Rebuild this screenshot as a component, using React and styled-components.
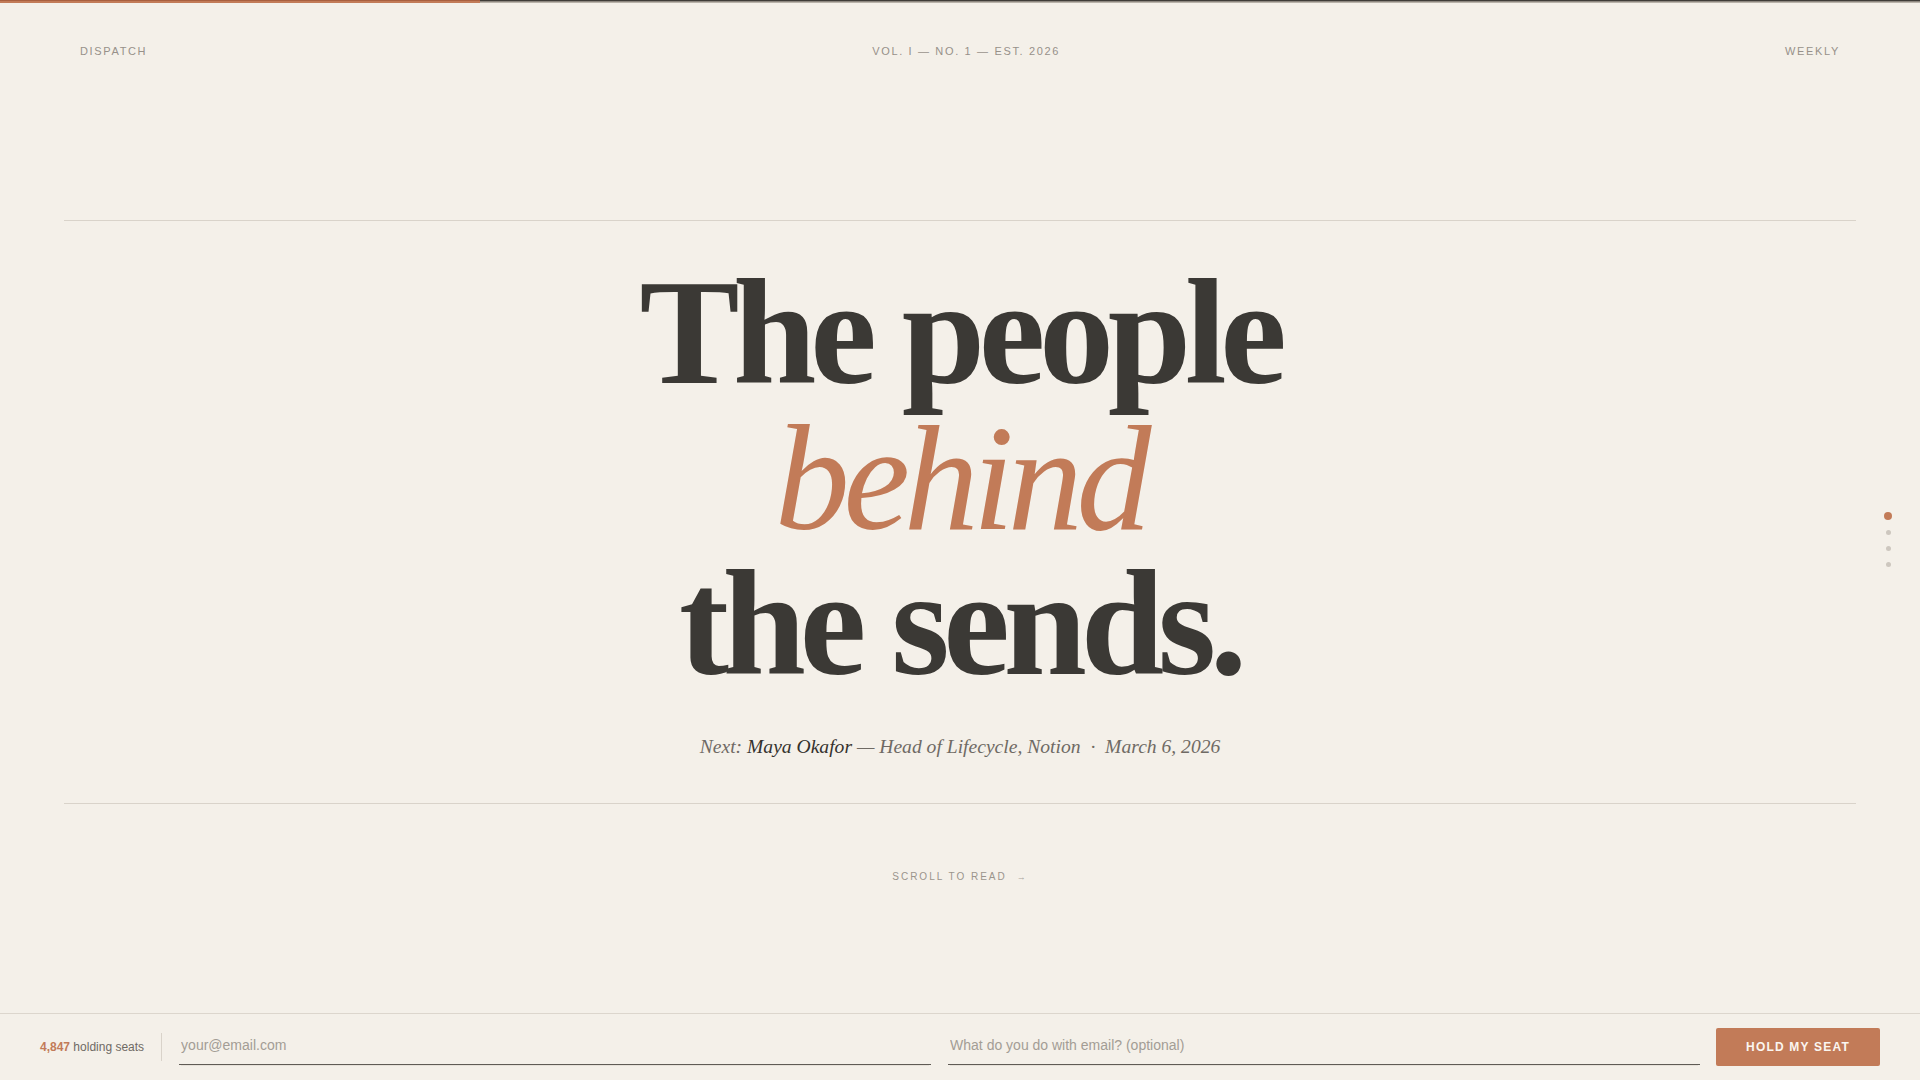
import React from "react";
import styled, { createGlobalStyle } from "styled-components";

const GlobalStyle = createGlobalStyle`
  html, body { margin: 0; padding: 0; background: #f4f0e9; }
  body { font-family: "Liberation Sans", Arial, sans-serif; color: #3b3935; overflow: hidden; }
  * { box-sizing: border-box; }
`;

const Page = styled.div`
  min-height: 100vh;
  display: flex;
  flex-direction: column;
  background: #f4f0e9;
`;

const ProgressTrack = styled.div`
  display: flex;
  height: 3px;
`;

const ProgressFill = styled.div`
  height: 3px;
  background: #c27b58;
  border-top: 1px solid #a9603f;
`;

const ProgressRest = styled.div`
  flex: 1;
  height: 3px;
  border-top: 1px solid #3f3c38;
  border-bottom: 1px solid #b9b3aa;
  background: #8d877f;
`;

const Header = styled.header`
  display: flex;
  justify-content: space-between;
  align-items: center;
  padding: 40px 80px 0;
`;

const Meta = styled.span`
  font-family: "Liberation Sans", Arial, sans-serif;
  font-size: 11px;
  line-height: 16px;
  letter-spacing: 0.15em;
  text-transform: uppercase;
  color: #97918a;
`;

const Hero = styled.section`
  margin-top: 161px;
  display: flex;
  flex-direction: column;
  align-items: center;
`;

const Rule = styled.hr`
  align-self: stretch;
  margin: 0 64px;
  border: none;
  height: 1px;
  background: #d9d3ca;
`;

const HeroBody = styled.div`
  padding: 39px 0 41px;
  display: flex;
  flex-direction: column;
  align-items: center;
`;

const Headline = styled.h1`
  margin: 0;
  font-family: "Liberation Serif", "Times New Roman", serif;
  font-weight: 700;
  font-size: 150px;
  line-height: 0.97;
  letter-spacing: -0.042em;
  color: #3b3935;
  text-align: center;
`;

const Line = styled.span`
  display: block;
  font-style: ${(p) => (p.$accent ? "italic" : "normal")};
  font-weight: ${(p) => (p.$accent ? 400 : 700)};
  color: ${(p) => (p.$accent ? "#c27b58" : "#3b3935")};
`;

const Subline = styled.p`
  margin: 35px 0 0;
  font-family: "Liberation Serif", "Times New Roman", serif;
  font-style: italic;
  font-size: 19.6px;
  line-height: 30px;
  color: #6f6a64;
`;

const Name = styled.span`
  color: #34322e;
`;

const Sep = styled.span`
  margin: 0 0.5em;
`;

const ScrollHint = styled.div`
  margin-top: 65px;
  font-family: "Liberation Sans", Arial, sans-serif;
  font-size: 10px;
  line-height: 16px;
  letter-spacing: 0.2em;
  color: #9a948c;
  text-align: center;
`;

const Arrow = styled.span`
  margin-left: 10px;
  font-size: 9px;
  color: #aaa49c;
`;

const DotNav = styled.nav`
  position: fixed;
  right: 26px;
  top: 50%;
  transform: translateY(-50%);
  display: flex;
  flex-direction: column;
  align-items: center;
`;

const DotSlot = styled.div`
  height: 16px;
  width: 12px;
  display: flex;
  align-items: center;
  justify-content: center;
`;

const Dot = styled.span`
  display: block;
  width: ${(p) => (p.$active ? 8 : 5)}px;
  height: ${(p) => (p.$active ? 8 : 5)}px;
  border-radius: 50%;
  background: ${(p) => (p.$active ? "#c27b58" : "#cdc7bf")};
`;

const Footer = styled.footer`
  margin-top: auto;
  height: 67px;
  border-top: 1px solid #dcd6cd;
  display: flex;
  align-items: center;
  gap: 16px;
  padding: 0 40px;
  background: #f4f0e9;
`;

const Seats = styled.div`
  font-family: "Liberation Sans", Arial, sans-serif;
  font-size: 12px;
  color: #6f6a64;
  white-space: nowrap;
`;

const Count = styled.strong`
  color: #c27b58;
  font-weight: 700;
`;

const Divider = styled.span`
  width: 1px;
  height: 28px;
  margin-left: 1px;
  background: #d9d3ca;
`;

const Field = styled.input`
  flex: 1;
  min-width: 0;
  height: 36px;
  padding: 0 2px 3px;
  margin-left: 1px;
  border: none;
  border-bottom: 1px solid #5f5b55;
  background: transparent;
  font-family: "Liberation Sans", Arial, sans-serif;
  font-size: 14px;
  color: #3b3935;
  outline: none;
  box-shadow: 0 3px 0 -2px #e6e1d9;
  &::placeholder { color: #a39d95; }
`;

const Button = styled.button`
  height: 38px;
  padding: 0 30px;
  border: none;
  border-radius: 2px;
  background: #c27b58;
  color: #fbf6f0;
  font-family: "Liberation Sans", Arial, sans-serif;
  font-weight: 700;
  font-size: 12px;
  letter-spacing: 0.1em;
  cursor: pointer;
  white-space: nowrap;
`;

export default function App() {
  return (
    <Page>
      <GlobalStyle />
      <ProgressTrack>
        <ProgressFill style={{ width: "25%" }} />
        <ProgressRest />
      </ProgressTrack>
      <Header>
        <Meta>Dispatch</Meta>
        <Meta>Vol. I — No. 1 — Est. 2026</Meta>
        <Meta>Weekly</Meta>
      </Header>
      <Hero>
        <Rule />
        <HeroBody>
          <Headline>
            <Line>The people</Line>
            <Line $accent>behind</Line>
            <Line>the sends.</Line>
          </Headline>
          <Subline>
            Next: <Name>Maya Okafor</Name> — Head of Lifecycle, Notion
            <Sep>·</Sep>March 6, 2026
          </Subline>
        </HeroBody>
        <Rule />
        <ScrollHint>
          SCROLL TO READ<Arrow>→</Arrow>
        </ScrollHint>
      </Hero>
      <DotNav>
        {[true, false, false, false].map((a, i) => (
          <DotSlot key={i}>
            <Dot $active={a} />
          </DotSlot>
        ))}
      </DotNav>
      <Footer>
        <Seats>
          <Count>4,847</Count> holding seats
        </Seats>
        <Divider />
        <Field type="email" placeholder="your@email.com" />
        <Field type="text" placeholder="What do you do with email? (optional)" />
        <Button>HOLD MY SEAT</Button>
      </Footer>
    </Page>
  );
}
